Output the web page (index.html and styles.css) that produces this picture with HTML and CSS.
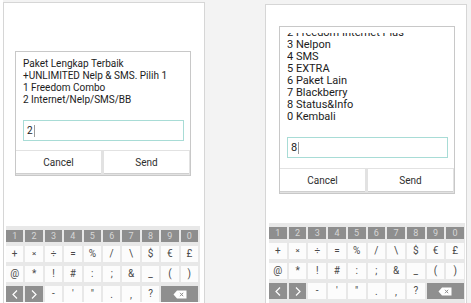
FILE: index.html
```html
<!DOCTYPE html>
<html>
<head>
<meta charset="utf-8">
<link rel="stylesheet" href="styles.css">
</head>
<body>
<div class="stage">
  <section class="phone phone-a">
    <div class="dialog">
      <div class="msg">
        <div class="msg-lines">
          <div>Paket Lengkap Terbaik</div>
          <div>+UNLIMITED Nelp &amp; SMS. Pilih 1</div>
          <div>1 Freedom Combo</div>
          <div>2 Internet/Nelp/SMS/BB</div>
        </div>
      </div>
      <div class="field"><span>2</span><i class="caret"></i></div>
      <div class="actions"><button class="btn">Cancel</button><button class="btn">Send</button></div>
    </div>
    <div class="kbd">
      <div class="row num"><span class="key">1</span><span class="key">2</span><span class="key">3</span><span class="key">4</span><span class="key">5</span><span class="key">6</span><span class="key">7</span><span class="key">8</span><span class="key">9</span><span class="key">0</span></div>
      <div class="row"><span class="key">+</span><span class="key sm">×</span><span class="key">÷</span><span class="key">=</span><span class="key">%</span><span class="key">/</span><span class="key">\</span><span class="key">$</span><span class="key">€</span><span class="key">£</span></div>
      <div class="row"><span class="key">@</span><span class="key">*</span><span class="key">!</span><span class="key">#</span><span class="key">:</span><span class="key">;</span><span class="key">&amp;</span><span class="key">_</span><span class="key">(</span><span class="key">)</span></div>
      <div class="row">
        <span class="key dark"><svg width="6" height="9" viewBox="0 0 6 9"><polyline points="5,0.5 1,4.5 5,8.5" fill="none" stroke="#fff" stroke-width="1.2"/></svg></span>
        <span class="key dark"><svg width="6" height="9" viewBox="0 0 6 9"><polyline points="1,0.5 5,4.5 1,8.5" fill="none" stroke="#fff" stroke-width="1.2"/></svg></span>
        <span class="key">-</span><span class="key">'</span><span class="key">"</span><span class="key low">.</span><span class="key low">,</span><span class="key">?</span>
        <span class="key dark wide"><svg width="14" height="9" viewBox="0 0 14 9"><path d="M4 0.5H13.5V8.5H4L0.5 4.5Z" fill="#fff"/><path d="M7 2.8L10.2 6.2M10.2 2.8L7 6.2" stroke="#8f8f8f" stroke-width="1"/></svg></span>
      </div>
    </div>
  </section>

  <section class="phone phone-b">
    <div class="dialog">
      <div class="msg">
        <div class="msg-lines">
          <div>2 Freedom Internet Plus</div>
          <div>3 Nelpon</div>
          <div>4 SMS</div>
          <div>5 EXTRA</div>
          <div>6 Paket Lain</div>
          <div>7 Blackberry</div>
          <div>8 Status&amp;Info</div>
          <div>0 Kembali</div>
        </div>
      </div>
      <div class="field"><span>8</span><i class="caret"></i></div>
      <div class="actions"><button class="btn">Cancel</button><button class="btn">Send</button></div>
    </div>
    <div class="kbd">
      <div class="row num"><span class="key">1</span><span class="key">2</span><span class="key">3</span><span class="key">4</span><span class="key">5</span><span class="key">6</span><span class="key">7</span><span class="key">8</span><span class="key">9</span><span class="key">0</span></div>
      <div class="row"><span class="key">+</span><span class="key sm">×</span><span class="key">÷</span><span class="key">=</span><span class="key">%</span><span class="key">/</span><span class="key">\</span><span class="key">$</span><span class="key">€</span><span class="key">£</span></div>
      <div class="row"><span class="key">@</span><span class="key">*</span><span class="key">!</span><span class="key">#</span><span class="key">:</span><span class="key">;</span><span class="key">&amp;</span><span class="key">_</span><span class="key">(</span><span class="key">)</span></div>
      <div class="row">
        <span class="key dark"><svg width="6" height="9" viewBox="0 0 6 9"><polyline points="5,0.5 1,4.5 5,8.5" fill="none" stroke="#fff" stroke-width="1.2"/></svg></span>
        <span class="key dark"><svg width="6" height="9" viewBox="0 0 6 9"><polyline points="1,0.5 5,4.5 1,8.5" fill="none" stroke="#fff" stroke-width="1.2"/></svg></span>
        <span class="key">-</span><span class="key">'</span><span class="key">"</span><span class="key low">.</span><span class="key low">,</span><span class="key">?</span>
        <span class="key dark wide"><svg width="14" height="9" viewBox="0 0 14 9"><path d="M4 0.5H13.5V8.5H4L0.5 4.5Z" fill="#fff"/><path d="M7 2.8L10.2 6.2M10.2 2.8L7 6.2" stroke="#8f8f8f" stroke-width="1"/></svg></span>
      </div>
      <div class="row">
        <span class="key dark wide"></span><span class="key dark"></span><span class="key wide space"></span><span class="key wide space"></span><span class="key"></span><span class="key dark wide"></span>
      </div>
    </div>
  </section>
</div>
</body>
</html>
```

FILE: styles.css
```css
html, body {
  margin: 0;
  padding: 0;
  background: #ffffff;
  overflow: hidden;
}

.stage {
  display: flex;
  align-items: flex-start;
  gap: 60px;
  width: 471px;
  height: 303px;
  box-sizing: border-box;
  border-left: 3px solid #ffffff;
  background: #f3f3f3;
  font-family: Roboto, "Noto Sans", sans-serif;
  overflow: hidden;
}

.phone {
  width: 202px;
  box-sizing: border-box;
  background: #ffffff;
  border: 1px solid #d6d6d6;
  border-bottom: 0;
  height: 320px;
  display: flex;
  flex-direction: column;
}

.phone-a { margin-top: 2px; }
.phone-b { margin-top: 4px; }

.dialog {
  width: 176px;
  box-sizing: border-box;
  border: 1px solid #c8c8c8;
  background: #ffffff;
}

.phone-a .dialog { margin: 48px 0 0 11px; }
.phone-b .dialog { margin: 21px 0 0 13px; }

.msg {
  padding: 6px 7px 0;
}

.msg-lines {
  font-size: 10px;
  line-height: 12px;
  color: #1c1c1c;
  white-space: nowrap;
}

.phone-b .msg-lines {
  font-size: 11px;
  height: 90px;
  overflow: hidden;
  display: flex;
  flex-direction: column;
  justify-content: flex-end;
}

.field {
  margin: 14px 6px 9px 7px;
  height: 21px;
  box-sizing: border-box;
  border: 1px solid #a8dcd6;
  display: flex;
  align-items: center;
  padding-left: 3px;
  font-size: 10px;
  color: #1c1c1c;
}

.phone-b .field { margin-bottom: 10px; font-size: 11px; }

.caret {
  display: block;
  width: 1px;
  height: 12px;
  background: #9a9a9a;
  margin-left: 1px;
}

.actions {
  display: grid;
  grid-template-columns: 1fr 1fr;
  gap: 3px;
  padding: 1px 1px 2px 0;
  height: 25px;
  box-sizing: border-box;
  background: #e2e2e2;
}

.btn {
  background: #ffffff;
  border: 0;
  padding: 0;
  margin: 0;
  font-family: Roboto, "Noto Sans", sans-serif;
  font-size: 10px;
  color: #2e2e2e;
  box-shadow: 0 1px 0 #cfcfcf;
}

.kbd {
  display: flex;
  flex-direction: column;
  gap: 4px;
  padding: 4px 2px 0 0;
  background: #e8e8e8;
}

.phone-a .kbd { margin: 50px 0 0 2px; width: 194px; box-sizing: border-box; }
.phone-b .kbd { margin: 29px 0 0 3px; width: 196px; box-sizing: border-box; padding-right: 1px; }

.row {
  display: grid;
  grid-template-columns: repeat(10, 1fr);
  gap: 2px;
  height: 16px;
}

.row.num { height: 12px; }

.key {
  display: flex;
  align-items: center;
  justify-content: center;
  background: #fcfcfc;
  font-size: 10px;
  color: #4a4a4a;
  line-height: 1;
}

.key.sm { font-size: 8px; }
.key.low { align-items: flex-end; padding-bottom: 2px; }

.num .key {
  background: #8e8e8e;
  color: #d6d6d6;
  font-size: 9px;
}

.key.dark { background: #8f8f8f; }
.key.wide { grid-column: span 2; }
```
